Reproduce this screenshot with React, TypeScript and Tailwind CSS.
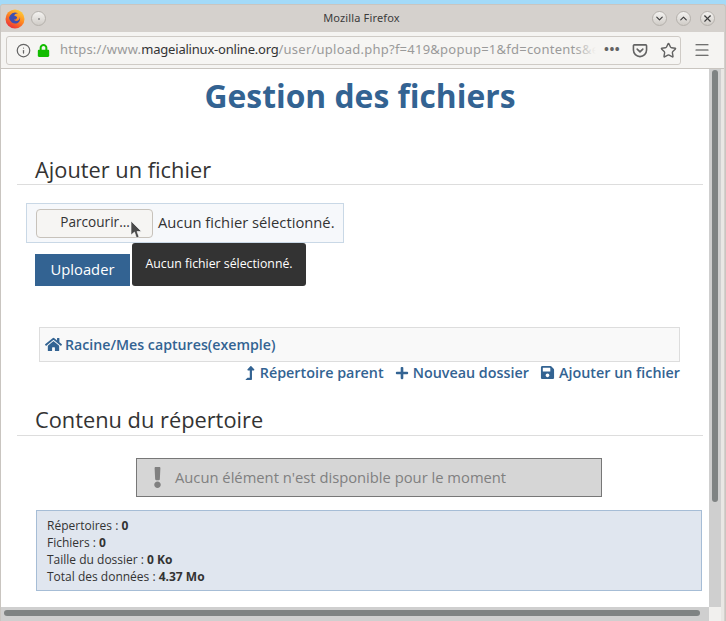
import { ChevronDown, ChevronUp, Info, Menu, Star, X } from "lucide-react";
import { FaExclamation, FaHome, FaLevelUpAlt, FaLock, FaPlus, FaSave } from "react-icons/fa";

const STATS = [
  { label: "Répertoires : ", value: "0" },
  { label: "Fichiers : ", value: "0" },
  { label: "Taille du dossier : ", value: "0 Ko" },
  { label: "Total des données : ", value: "4.37 Mo" },
];

function FirefoxLogo() {
  return (
    <svg viewBox="0 0 20 20" className="h-[20px] w-[20px]">
      <defs>
        <linearGradient id="ff" x1="0.8" y1="0" x2="0.2" y2="1">
          <stop offset="0" stopColor="#ffd43a" />
          <stop offset="0.45" stopColor="#ff8a1f" />
          <stop offset="1" stopColor="#e8263d" />
        </linearGradient>
      </defs>
      <circle cx="10" cy="10" r="9.5" fill="url(#ff)" />
      <path d="M5 6.500a6.500 6.500 0 0 1 8-2.200A6 6 0 0 0 9 6.300l3 1.600c.4 1.600-1.200 2.800-3 2.600.4 1.400 2.600 2 4.400.8 1.400-1 1.600-2.600 1.200-3.800 1.200 2.600.2 5.600-2.400 6.800A6.500 6.500 0 0 1 4 8.800z" fill="#3f4fb0" />
    </svg>
  );
}

function PocketIcon() {
  return (
    <svg viewBox="0 0 16 16" className="h-[15px] w-[16px]" fill="none" stroke="#636363" strokeWidth="1.7">
      <path d="M2 2h12a1 1 0 0 1 1 1v4.500a7 7 0 0 1-14 0V3a1 1 0 0 1 1-1z" />
      <path d="M5 6.500l3 3 3-3" strokeLinecap="round" strokeLinejoin="round" />
    </svg>
  );
}

function WinButton({ children }: { children: React.ReactNode }) {
  return (
    <div className="flex h-[15px] w-[15px] items-center justify-center rounded-full border border-[#b5b1ac] bg-gradient-to-b from-[#f4f3f1] to-[#d0ccc7] text-[#3d3d3d]">
      {children}
    </div>
  );
}

function SectionTitle({ children, className = "" }: { children: React.ReactNode; className?: string }) {
  return (
    <div className={`border-b border-[#dddddd] pl-[18px] text-[21.8px] leading-[29px] text-[#333333] ${className}`}>
      {children}
    </div>
  );
}

export default function App() {
  return (
    <div className="h-[621px] w-[726px] overflow-hidden bg-[#a3daf8] pt-[4px] font-['Open_Sans',sans-serif]">
      <div className="h-[617px] overflow-hidden rounded-t-[3px] border-x border-t border-[#c9c5c0] bg-[#d4d0cc] pr-[1px]">
        {/* Title bar */}
        <div className="flex h-[27px] items-center bg-[#d5d1cd] pl-[4px] pr-[9px] font-['Noto_Sans',sans-serif]">
          <FirefoxLogo />
          <div className="ml-[6px] flex h-[15px] w-[15px] items-center justify-center rounded-full border border-[#b5b1ac] bg-gradient-to-b from-[#f4f3f1] to-[#d0ccc7]">
            <div className="h-[2px] w-[2px] rounded-full bg-[#888888]" />
          </div>
          <div className="flex-1 pl-[25px] text-center text-[11px] tracking-[0.15px] text-[#3c3c3c]">Mozilla Firefox</div>
          <div className="flex gap-[9px]">
            <WinButton><ChevronDown size={11} strokeWidth={2.5} /></WinButton>
            <WinButton><ChevronUp size={11} strokeWidth={2.5} /></WinButton>
            <WinButton><X size={11} strokeWidth={2.5} /></WinButton>
          </div>
        </div>

        {/* Toolbar */}
        <div className="flex h-[37px] items-center border-b border-[#c9c5c0] bg-[#f5f4f2] pl-[5px]">
          <div className="flex h-[29px] flex-1 items-center rounded-[3px] border border-[#cfcbc6] bg-[#f6f5f3] pl-[9px]">
            <Info size={15} className="text-[#666666]" />
            <FaLock size={13} className="ml-[6px] text-[#12bc00]" />
            <div className="relative ml-[10px] w-[536px] overflow-hidden whitespace-nowrap font-['Noto_Sans',sans-serif] text-[13px] tracking-[0.24px] text-[#9a9a9a]">
              https://www.<span className="tracking-[-0.21px] text-[#333333]">mageialinux-online.org</span>/user/upload.php?f=419&amp;popup=1&amp;fd=contents&amp;ed
              <div className="absolute inset-y-0 right-0 w-[22px] bg-gradient-to-r from-transparent to-[#f6f5f3]" />
            </div>
            <div className="ml-[8px] text-[13px] font-bold tracking-[0.5px] text-[#636363]">•••</div>
            <div className="ml-[12px]"><PocketIcon /></div>
            <Star size={17} strokeWidth={2} className="ml-[12px] text-[#636363]" />
          </div>
          <Menu size={18} strokeWidth={1.6} className="ml-[12px] mr-[13px] text-[#444444]" />
        </div>

        {/* Browser viewport */}
        <div className="flex h-[552px] bg-white">
          <div className="w-[708px] shrink-0">
            <div className="h-[538px] overflow-hidden bg-white pl-[16px] text-[#333333]">
              <div className="w-[686px]">
                <h1 className="pt-[7px] text-center text-[31.8px] font-bold leading-[40px] text-[#336392]">Gestion des fichiers</h1>

                <div className="mt-[39px]"><SectionTitle>Ajouter un fichier</SectionTitle></div>

                <div className="relative">
                  <div className="ml-[9px] mt-[18px] flex h-[40px] w-[318px] items-center border border-[#c9d8e6] bg-[#f6f8fb] pl-[9px]">
                    <div className="flex h-[29px] w-[117px] items-center justify-center rounded-[4px] border border-[#c7c2bb] bg-[#f6f5f3] pb-[1px] pl-[1px] text-[13.6px] text-[#333333]">
                      Parcourir…
                    </div>
                    <span className="mb-[2px] ml-[5px] text-[14.75px] text-[#333333]">Aucun fichier sélectionné.</span>
                  </div>
                  <div className="ml-[18px] mt-[11px] flex h-[32px] w-[95px] items-center justify-center bg-[#336392] pb-[1px] text-[14.75px] text-white">
                    Uploader
                  </div>

                  {/* cursor + tooltip */}
                  <svg viewBox="0 0 12 20" className="absolute left-[113px] top-[17px] z-10 h-[20px] w-[12px]">
                    <path d="M1 1v14l3.500-3 2 6 2.500-1-2-5.500h4.500z" fill="#4a4a4a" stroke="#ffffff" strokeWidth="0.6" />
                  </svg>
                  <div className="absolute left-[115px] top-[40px] flex h-[43px] w-[174px] items-center justify-center rounded-[3px] bg-[#333333] text-[12.3px] text-white">
                    Aucun fichier sélectionné.
                  </div>
                </div>

                <div className="ml-[22px] mt-[41px] flex h-[35px] w-[641px] items-center gap-[3px] border border-[#dddddd] bg-[#f9f9f9] pl-[5px] text-[14.2px] font-semibold text-[#336392]">
                  <FaHome size={17} />
                  Racine/Mes captures(exemple)
                </div>
                <div className="ml-[22px] mt-[1px] flex h-[19px] w-[641px] items-center justify-end gap-[11px] text-[14.35px] font-semibold text-[#336392]">
                  <span className="flex items-center gap-[3px]"><FaLevelUpAlt size={14} />Répertoire parent</span>
                  <span className="flex items-center gap-[4px]"><FaPlus size={14} />Nouveau dossier</span>
                  <span className="flex items-center gap-[4px]"><FaSave size={15} />Ajouter un fichier</span>
                </div>

                <div className="mt-[23px]"><SectionTitle className="pb-[1px]">Contenu du répertoire</SectionTitle></div>

                <div className="ml-[119px] mt-[22px] flex h-[39px] w-[466px] items-center border border-[#777777] bg-[#d6d6d6] pl-[10px] text-[14.75px] text-[#808080]">
                  <FaExclamation size={21} />
                  <span className="mb-[1px] ml-[7px]">Aucun élément n'est disponible pour le moment</span>
                </div>

                <div className="ml-[19px] mt-[13px] h-[81px] w-[666px] border border-[#a6bdd6] bg-[#e0e6ef] px-[10px] py-[6px] text-[12px] leading-[17px] text-[#333333]">
                  {STATS.map((s) => (
                    <div key={s.label}>{s.label}<b>{s.value}</b></div>
                  ))}
                </div>
              </div>
            </div>

            {/* Horizontal scrollbar */}
            <div className="h-[14px] bg-[#cfcfcf] pl-[3px] pt-[3px]">
              <div className="h-[6px] w-[696px] rounded-full bg-[#7f8383]" />
            </div>
          </div>

          {/* Vertical scrollbar */}
          <div className="flex w-[16px] flex-col bg-[#e9e7e4]">
            <div className="h-[538px] w-[12px] bg-[#cfcfcf] px-[3px] pt-[1px]">
              <div className="h-[432px] w-[6px] rounded-full bg-[#7f8383]" />
            </div>
            <div className="h-[14px] w-[12px] bg-[#f1f0ee]" />
          </div>
        </div>
      </div>
    </div>
  );
}
